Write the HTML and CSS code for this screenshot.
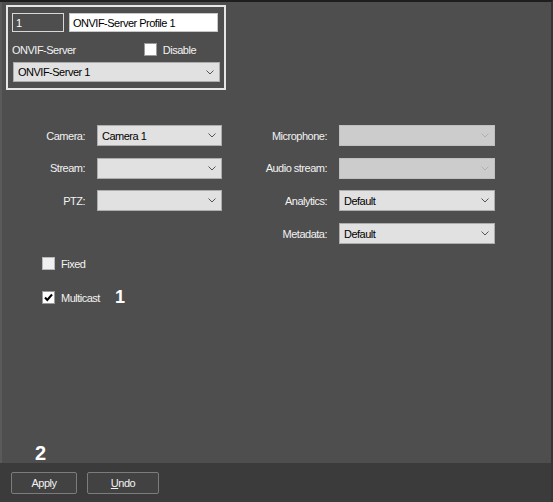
FILE: index.html
```html
<!DOCTYPE html>
<html lang="en">
<head>
  <meta charset="UTF-8">
  <title>ONVIF-Server Profile</title>
  <link rel="stylesheet" href="styles.css">
</head>
<body>
  <div class="window">
    <div class="main">
      <div class="profile-box">
        <div class="profile-row">
          <div class="field field-id">1</div>
          <div class="field field-name">ONVIF-Server Profile 1</div>
        </div>
        <div class="profile-row server-row">
          <span class="label">ONVIF-Server</span>
          <label class="check">
            <span class="check-box"></span>
            <span>Disable</span>
          </label>
        </div>
        <div class="combo combo-server">
          <span>ONVIF-Server 1</span>
          <svg class="chevron" width="8" height="5" viewBox="0 0 8 5"><polyline points="0.5,0.5 4,4 7.5,0.5" /></svg>
        </div>
      </div>

      <div class="form">
        <span class="form-label">Camera:</span>
        <div class="combo"><span>Camera 1</span><svg class="chevron" width="8" height="5" viewBox="0 0 8 5"><polyline points="0.5,0.5 4,4 7.5,0.5" /></svg></div>
        <span class="form-label">Microphone:</span>
        <div class="combo disabled"><span></span><svg class="chevron" width="8" height="5" viewBox="0 0 8 5"><polyline points="0.5,0.5 4,4 7.5,0.5" /></svg></div>

        <span class="form-label">Stream:</span>
        <div class="combo"><span></span><svg class="chevron" width="8" height="5" viewBox="0 0 8 5"><polyline points="0.5,0.5 4,4 7.5,0.5" /></svg></div>
        <span class="form-label">Audio stream:</span>
        <div class="combo disabled"><span></span><svg class="chevron" width="8" height="5" viewBox="0 0 8 5"><polyline points="0.5,0.5 4,4 7.5,0.5" /></svg></div>

        <span class="form-label">PTZ:</span>
        <div class="combo"><span></span><svg class="chevron" width="8" height="5" viewBox="0 0 8 5"><polyline points="0.5,0.5 4,4 7.5,0.5" /></svg></div>
        <span class="form-label">Analytics:</span>
        <div class="combo"><span>Default</span><svg class="chevron" width="8" height="5" viewBox="0 0 8 5"><polyline points="0.5,0.5 4,4 7.5,0.5" /></svg></div>

        <span></span>
        <span></span>
        <span class="form-label">Metadata:</span>
        <div class="combo"><span>Default</span><svg class="chevron" width="8" height="5" viewBox="0 0 8 5"><polyline points="0.5,0.5 4,4 7.5,0.5" /></svg></div>
      </div>

      <div class="options">
        <label class="check">
          <span class="check-box unchecked"></span>
          <span>Fixed</span>
        </label>
        <label class="check">
          <span class="check-box"><svg width="11" height="11" viewBox="0 0 11 11"><polyline points="2,5.5 4.3,8 9,2.5" /></svg></span>
          <span>Multicast</span>
          <span class="marker marker-1">1</span>
        </label>
      </div>

      <span class="marker marker-2">2</span>
    </div>

    <div class="footer">
      <button class="button apply">Apply</button>
      <button class="button undo"><u>U</u>ndo</button>
    </div>
  </div>
</body>
</html>
```

FILE: styles.css
```css
body {
  margin: 0;
  font-family: "Liberation Sans", Arial, sans-serif;
  font-size: 11px;
  letter-spacing: -0.5px;
  color: #f2f2f2;
  background-color: #4e4e4e;
}

.window {
  width: 553px;
  height: 502px;
  box-sizing: border-box;
  display: flex;
  flex-direction: column;
  border-top: 2px solid #1e1e1e;
  border-right: 2px solid #363636;
}

.main {
  flex: 1;
  display: flex;
  flex-direction: column;
  border-left: 2px solid #5a5a5a;
}

/* profile header */
.profile-box {
  width: 220px;
  height: 85px;
  box-sizing: border-box;
  margin: 3px 0 0 4px;
  border: 2px solid #e6e6e6;
  padding: 6px 4px 0 4px;
}

.profile-row {
  display: flex;
  gap: 5px;
}

.field {
  height: 19px;
  box-sizing: border-box;
  display: flex;
  align-items: center;
  padding-left: 3px;
}

.field-id {
  width: 52px;
  border: 1px solid #d8d8d8;
  color: #fff;
}

.field-name {
  width: 149px;
  background-color: #fff;
  border: 1px solid #c8c8c8;
  color: #000;
}

.server-row {
  justify-content: space-between;
  align-items: center;
  height: 13px;
  margin: 11px 24px 6px 0;
}

.check {
  display: flex;
  align-items: center;
  gap: 6px;
}

.check-box {
  width: 13px;
  height: 13px;
  box-sizing: border-box;
  background-color: #fff;
  border: 1px solid #9a9a9a;
  display: flex;
  align-items: center;
  justify-content: center;
}

.check-box.unchecked {
  background-color: #f0f0f0;
  border-color: #b8b8b8;
}

.check-box polyline {
  fill: none;
  stroke: #000;
  stroke-width: 2;
}

/* combo boxes */
.combo {
  height: 21px;
  box-sizing: border-box;
  background-color: #e1e1e1;
  border: 1px solid #adadad;
  color: #000;
  display: flex;
  align-items: center;
  justify-content: space-between;
  padding: 0 5px 0 4px;
}

.combo-server {
  width: 207px;
  height: 20px;
  margin-left: 1px;
}

.combo.disabled {
  background-color: #cccccc;
  border-color: #bfbfbf;
}

.chevron polyline {
  fill: none;
  stroke: #555;
  stroke-width: 1;
}

.disabled .chevron polyline {
  stroke: #b0b0b0;
}

/* camera / audio form */
.form {
  display: grid;
  grid-template-columns: 95px 125px 117px 156px;
  grid-auto-rows: 21px;
  row-gap: 11.7px;
  margin-top: 35px;
}

.form-label {
  text-align: right;
  padding-right: 12px;
  align-self: center;
}

.options {
  display: flex;
  flex-direction: column;
  gap: 17px;
  margin: 13px 0 0 40px;
}

.marker {
  font-size: 18px;
  font-weight: bold;
  letter-spacing: 0;
  color: #fff;
}

.marker-1 {
  margin-left: 9px;
}

.marker-2 {
  margin: auto 0 0 33px;
  font-size: 20px;
  line-height: 20px;
}

/* bottom bar */
.footer {
  height: 39px;
  box-sizing: border-box;
  background-color: #3b3b3b;
  display: flex;
  gap: 10px;
  padding: 9px 0 0 11px;
}

.button {
  height: 22px;
  box-sizing: border-box;
  background-color: #424242;
  border: 1px solid #7c7c7c;
  border-radius: 2px;
  color: #f2f2f2;
  font-family: inherit;
  font-size: 11px;
  letter-spacing: -0.5px;
  padding: 0;
}

.apply {
  width: 66px;
}

.undo {
  width: 72px;
}
```
